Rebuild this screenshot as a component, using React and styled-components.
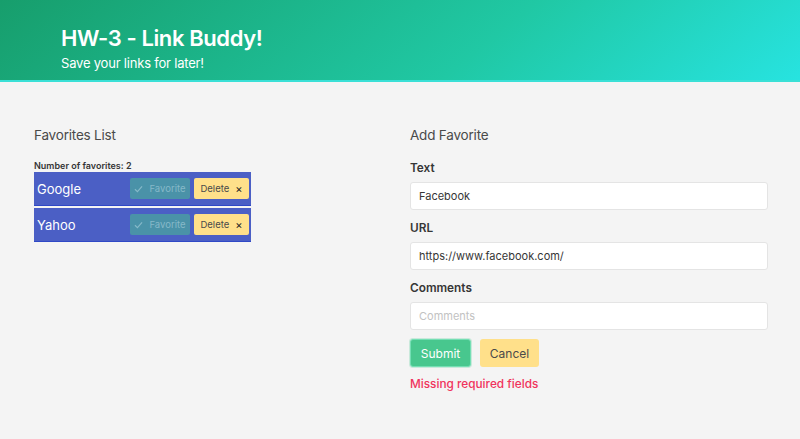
import styled, { createGlobalStyle } from "styled-components";

const GlobalStyle = createGlobalStyle`
    html, body {
        margin: 0;
        padding: 0;
        background: #f4f4f4;
        font-family: Inter, "Noto Sans", "Liberation Sans", sans-serif;
    }
`;

const Page = styled.div`
    width: 800px;
    min-height: 439px;
    background: #f4f4f4;
`;

const Hero = styled.header`
    height: 82px;
    box-sizing: border-box;
    padding: 24px 61px 0;
    background: linear-gradient(141deg, #179e6c 0%, #20c8a4 60%, #27e3e0 100%);
    border-bottom: 2px solid #3ae0d6;
    color: white;
`;

const Title = styled.h1`
    margin: 0;
    font-size: 22px;
    font-weight: 600;
    letter-spacing: -0.4px;
    line-height: 28px;
`;

const Subtitle = styled.h2`
    margin: 2px 0 0;
    font-size: 13px;
    font-weight: 400;
    letter-spacing: -0.2px;
    line-height: 18px;
`;

const Columns = styled.main`
    display: grid;
    grid-template-columns: 342px 358px;
    column-gap: 34px;
    padding: 44px 0 0 34px;
`;

const SectionTitle = styled.h3`
    margin: 0 0 ${(p) => p.$gap};
    font-size: 13.5px;
    font-weight: 400;
    letter-spacing: -0.2px;
    color: #4a4a4a;
    line-height: 18px;
`;

const Count = styled.div`
    font-size: 9px;
    font-weight: 600;
    color: #363636;
    line-height: 12px;
`;

const List = styled.ul`
    list-style: none;
    margin: 0;
    padding: 0;
    width: 217px;
    display: flex;
    flex-direction: column;
    gap: 2px;
`;

const Item = styled.li`
    display: flex;
    align-items: center;
    height: 34px;
    box-sizing: border-box;
    padding: 0 2px 0 3px;
    background: #4b5fc5;
    border-bottom: 1px solid #2f48c6;
    color: white;
    font-size: 13px;
`;

const Name = styled.span`
    flex: 1;
`;

const SmallButton = styled.button`
    display: flex;
    align-items: center;
    justify-content: center;
    gap: 6px;
    height: 21px;
    box-sizing: border-box;
    padding: 0;
    margin-left: 4px;
    border: none;
    border-radius: 2px;
    font-family: inherit;
    font-size: 9.5px;
    background: ${(p) => (p.$fav ? "#4a92a8" : "#ffe08a")};
    color: ${(p) => (p.$fav ? "#86b9c9" : "#4a4a4a")};
    width: ${(p) => (p.$fav ? "60px" : "55px")};

    svg {
        flex-shrink: 0;
    }
`;

const Cross = styled.span`
    font-size: 11px;
    color: #222;
`;

const Form = styled.form`
    display: flex;
    flex-direction: column;
`;

const Label = styled.label`
    font-size: 11.8px;
    font-weight: 600;
    color: #363636;
    line-height: 15px;
    margin: 11px 0 6px;
`;

const Input = styled.input`
    height: 28px;
    box-sizing: border-box;
    padding: 0 8px;
    border: 1px solid #e4e4e4;
    border-radius: 3px;
    background: white;
    font-family: inherit;
    font-size: 11px;
    color: #363636;

    &::placeholder {
        color: #c2c2c2;
    }
`;

const ButtonRow = styled.div`
    display: flex;
    gap: 9px;
    margin-top: 9px;
`;

const FormButton = styled.button`
    height: 28px;
    width: ${(p) => p.$width};
    box-sizing: border-box;
    border: ${(p) => (p.$primary ? "1px solid #74dfb4" : "none")};
    border-radius: 3px;
    font-family: inherit;
    font-size: 12px;
    background: ${(p) => (p.$primary ? "#48c78e" : "#ffe08a")};
    color: ${(p) => (p.$primary ? "white" : "#4a4a4a")};
    box-shadow: ${(p) => (p.$primary ? "0 0 0 1px rgba(72,199,142,0.25)" : "none")};
`;

const ErrorText = styled.p`
    margin: 10px 0 0;
    font-size: 11.8px;
    font-weight: 500;
    color: #f0335c;
`;

const favorites = ["Google", "Yahoo"];

function Check() {
    return (
        <svg width="9" height="8" viewBox="0 0 10 9" fill="none">
            <path d="M1 4.8 L3.8 7.4 L9 1.6" stroke="currentColor" strokeWidth="1.3" />
        </svg>
    );
}

export default function App() {
    return (
        <Page>
            <GlobalStyle />
            <Hero>
                <Title>HW-3 - Link Buddy!</Title>
                <Subtitle>Save your links for later!</Subtitle>
            </Hero>
            <Columns>
                <section>
                    <SectionTitle $gap="16px">Favorites List</SectionTitle>
                    <Count>Number of favorites: 2</Count>
                    <List>
                        {favorites.map((name) => (
                            <Item key={name}>
                                <Name>{name}</Name>
                                <SmallButton $fav>
                                    <Check />
                                    Favorite
                                </SmallButton>
                                <SmallButton>
                                    Delete
                                    <Cross>×</Cross>
                                </SmallButton>
                            </Item>
                        ))}
                    </List>
                </section>
                <section>
                    <SectionTitle $gap="6px">Add Favorite</SectionTitle>
                    <Form>
                        <Label>Text</Label>
                        <Input defaultValue="Facebook" />
                        <Label>URL</Label>
                        <Input defaultValue="https://www.facebook.com/" />
                        <Label>Comments</Label>
                        <Input placeholder="Comments" />
                        <ButtonRow>
                            <FormButton type="button" $primary $width="61px">Submit</FormButton>
                            <FormButton type="button" $width="59px">Cancel</FormButton>
                        </ButtonRow>
                        <ErrorText>Missing required fields</ErrorText>
                    </Form>
                </section>
            </Columns>
        </Page>
    );
}
